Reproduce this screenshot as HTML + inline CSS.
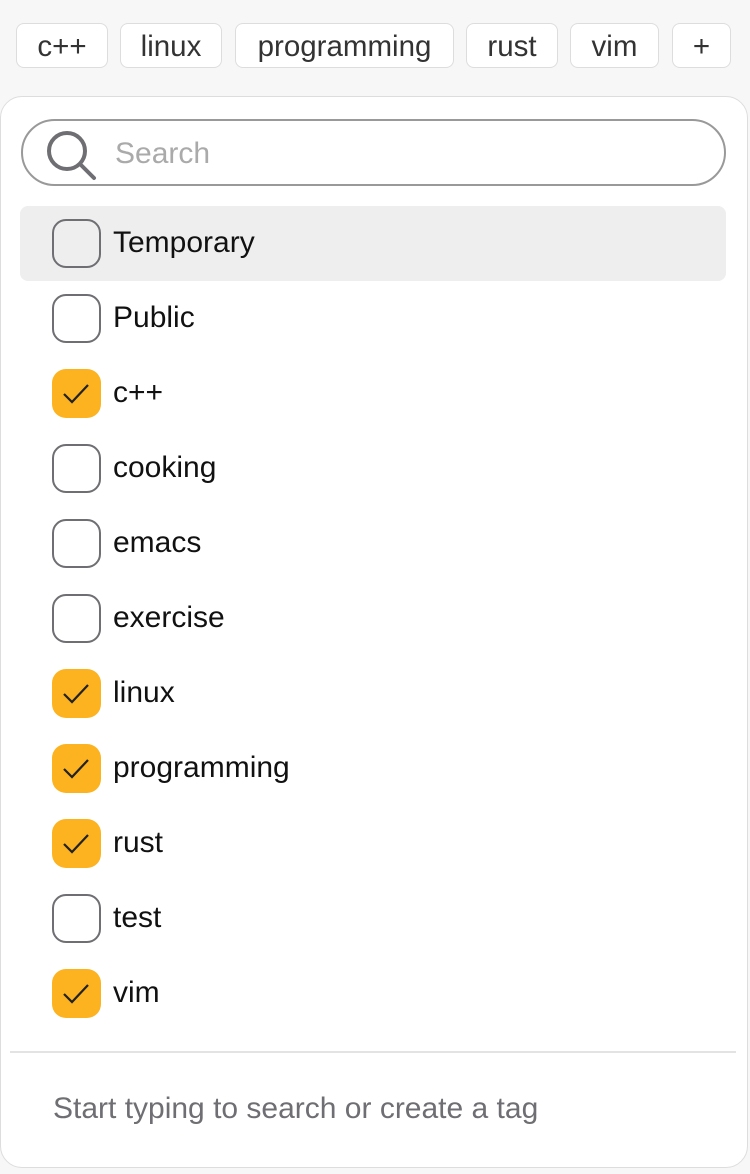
<!DOCTYPE html>
<html><head><meta charset="utf-8"><style>
*{box-sizing:border-box;margin:0;padding:0}
body{width:750px;height:1174px;background:#f7f7f7;font-family:"Liberation Sans",sans-serif;position:relative;overflow:hidden}
.chip{position:absolute;top:23px;height:45px;border:1.5px solid #ddd;border-radius:8px;background:#fff;color:#333;font-size:29.5px;display:flex;align-items:center;justify-content:center;padding-top:3px}
.pop{position:absolute;left:0;top:96px;width:748px;height:1072px;background:#fff;border:1.5px solid #ddd;border-radius:22px}
.search{position:absolute;left:21px;top:119px;width:705px;height:67px;border:2px solid #999;border-radius:34px}
.search span{position:absolute;left:92px;top:16px;font-size:30px;color:#aaa}
.row{position:absolute;left:20px;width:706px;height:75px}
.row.hl{background:#eee;border-radius:8px}
.cb{position:absolute;left:32px;top:13px;width:49px;height:49px;border:2px solid #6e6e73;border-radius:14px}
.cb.on{background:#fdb31f;border:none}
.row .t{position:absolute;left:93px;top:20px;font-size:30px;color:#111}
</style></head><body>
<div class="chip" style="left:16px;width:92px">c++</div>
<div class="chip" style="left:120px;width:102px">linux</div>
<div class="chip" style="left:235px;width:219px">programming</div>
<div class="chip" style="left:466px;width:92px">rust</div>
<div class="chip" style="left:570px;width:89px">vim</div>
<div class="chip" style="left:672px;width:59px">+</div>
<div class="pop"></div>
<div class="search">
<svg style="position:absolute;left:20px;top:6px" width="60" height="60" viewBox="0 0 60 60"><circle cx="24" cy="24" r="18" fill="none" stroke="#6e6e73" stroke-width="4"/><line x1="37" y1="37" x2="51" y2="51" stroke="#6e6e73" stroke-width="4" stroke-linecap="round"/></svg>
<span>Search</span></div>
<div class="row hl" style="top:206px"><div class="cb"></div><div class="t">Temporary</div></div>
<div class="row" style="top:281px"><div class="cb"></div><div class="t">Public</div></div>
<div class="row" style="top:356px"><div class="cb on"><svg width="49" height="49" viewBox="0 0 49 49"><path d="M12 25 L20 33 L36 16" fill="none" stroke="#222" stroke-width="2.2"/></svg></div><div class="t">c++</div></div>
<div class="row" style="top:431px"><div class="cb"></div><div class="t">cooking</div></div>
<div class="row" style="top:506px"><div class="cb"></div><div class="t">emacs</div></div>
<div class="row" style="top:581px"><div class="cb"></div><div class="t">exercise</div></div>
<div class="row" style="top:656px"><div class="cb on"><svg width="49" height="49" viewBox="0 0 49 49"><path d="M12 25 L20 33 L36 16" fill="none" stroke="#222" stroke-width="2.2"/></svg></div><div class="t">linux</div></div>
<div class="row" style="top:731px"><div class="cb on"><svg width="49" height="49" viewBox="0 0 49 49"><path d="M12 25 L20 33 L36 16" fill="none" stroke="#222" stroke-width="2.2"/></svg></div><div class="t">programming</div></div>
<div class="row" style="top:806px"><div class="cb on"><svg width="49" height="49" viewBox="0 0 49 49"><path d="M12 25 L20 33 L36 16" fill="none" stroke="#222" stroke-width="2.2"/></svg></div><div class="t">rust</div></div>
<div class="row" style="top:881px"><div class="cb"></div><div class="t">test</div></div>
<div class="row" style="top:956px"><div class="cb on"><svg width="49" height="49" viewBox="0 0 49 49"><path d="M12 25 L20 33 L36 16" fill="none" stroke="#222" stroke-width="2.2"/></svg></div><div class="t">vim</div></div>
<div style="position:absolute;left:10px;top:1051px;width:726px;height:2px;background:#e3e3e3"></div>
<div style="position:absolute;left:53px;top:1092px;font-size:30px;color:#6e6e73">Start typing to search or create a tag</div>
</body></html>
